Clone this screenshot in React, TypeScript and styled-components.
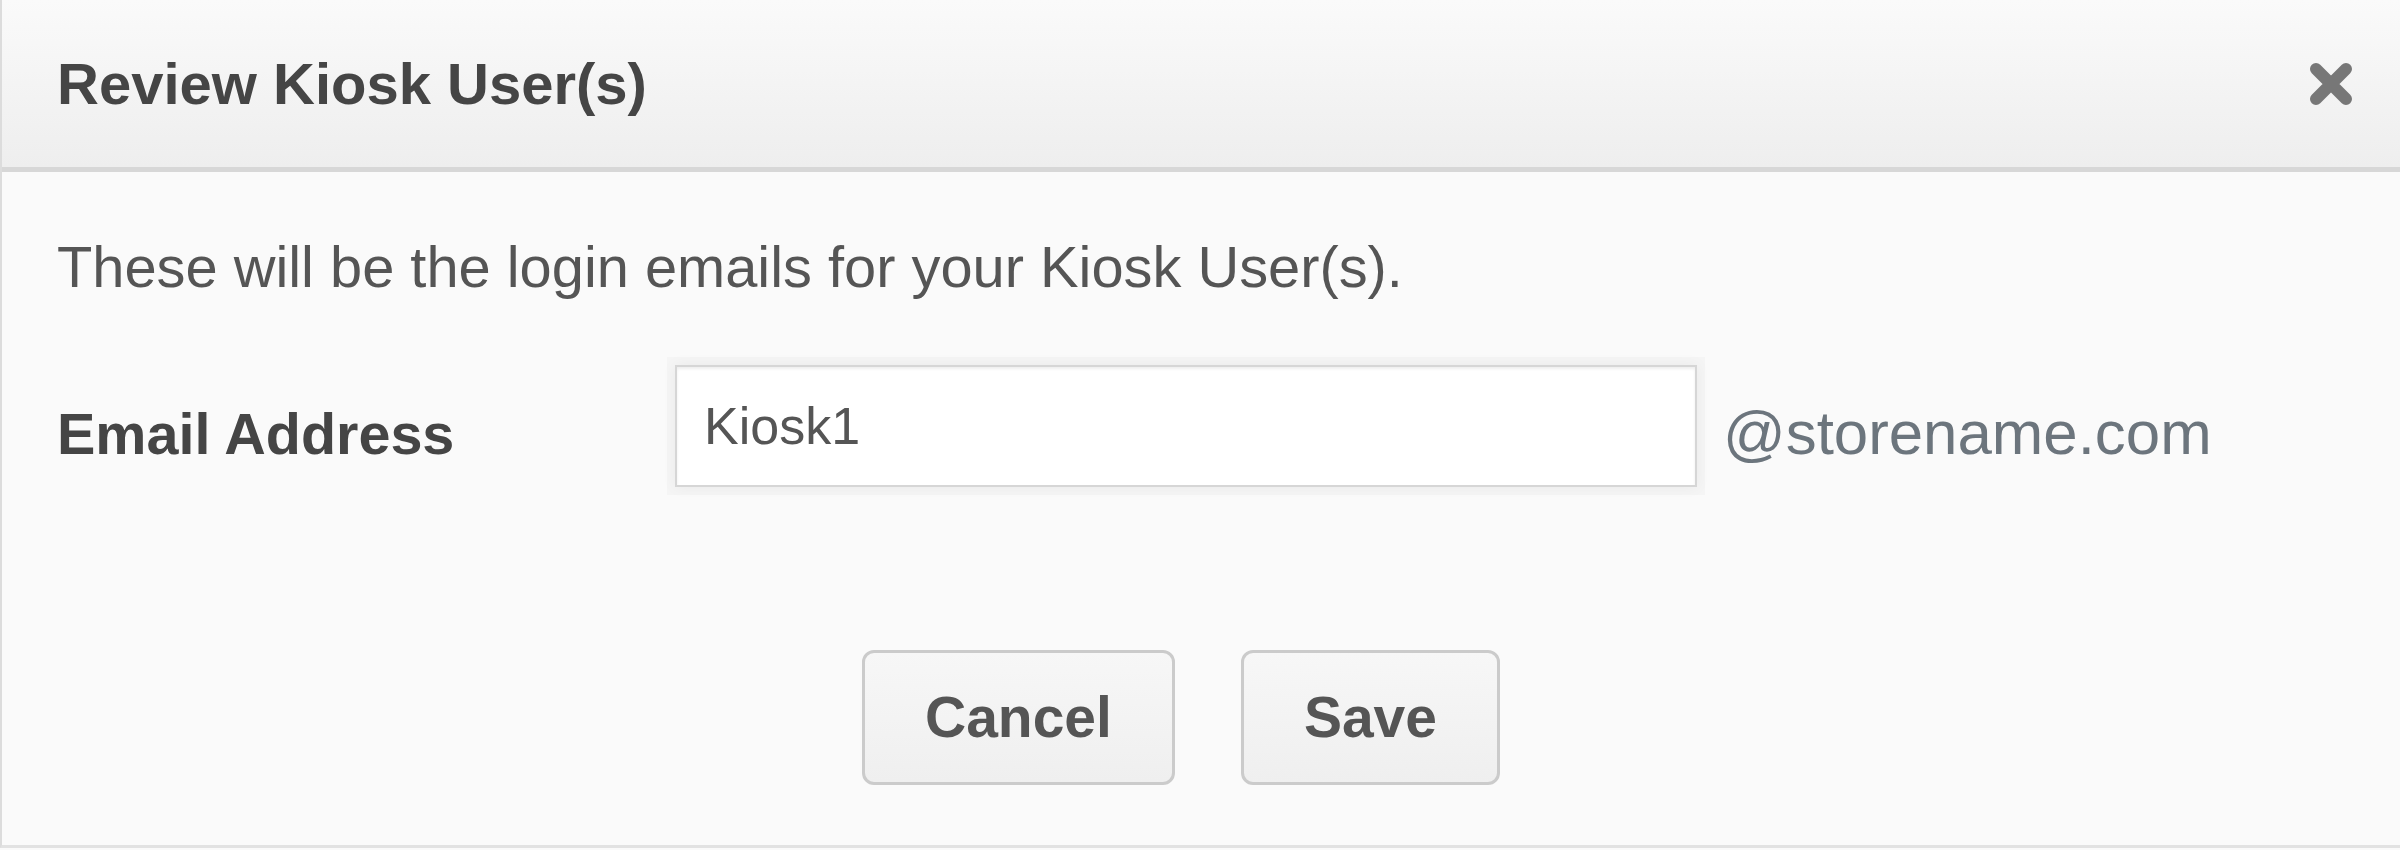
import styled, { createGlobalStyle } from "styled-components";

const GlobalStyle = createGlobalStyle`
  html, body {
    margin: 0;
    padding: 0;
    background: #fafafa;
  }
  body {
    font-family: "Liberation Sans", Arial, sans-serif;
    overflow: hidden;
  }
`;

const Modal = styled.div`
  width: 2400px;
  height: 848px;
  box-sizing: border-box;
  background: #fafafa;
  border-left: 2px solid #dcdcdc;
  border-bottom: 3px solid #e2e2e2;
  display: flex;
  flex-direction: column;
`;

const Header = styled.div`
  height: 167px;
  flex-shrink: 0;
  border-bottom: 5px solid #d7d7d7;
  background: linear-gradient(to bottom, #fafafa 0%, #eeeeee 100%);
  display: flex;
  align-items: center;
  justify-content: space-between;
  padding: 0 46px 0 55px;
`;

const Title = styled.h4`
  margin: 0;
  font-size: 58px;
  font-weight: 700;
  color: #454545;
  line-height: 1;
`;

const CloseButton = styled.button`
  border: 0;
  background: transparent;
  padding: 0;
  width: 46px;
  height: 46px;
  display: flex;
  cursor: pointer;
`;

const Body = styled.div`
  flex: 1;
  padding: 0 55px;
  display: flex;
  flex-direction: column;
`;

const Intro = styled.p`
  margin: 67px 0 0;
  font-size: 57.8px;
  line-height: 1;
  color: #555;
`;

const FormRow = styled.div`
  margin-top: 68px;
  display: flex;
  align-items: center;
`;

const Label = styled.label`
  width: 618px;
  flex-shrink: 0;
  font-size: 57.5px;
  font-weight: 700;
  line-height: 1;
  color: #454545;
  margin-top: 18px;
`;

const TextInput = styled.input`
  width: 1022px;
  height: 122px;
  box-sizing: border-box;
  border: 2px solid #d6d6d6;
  border-radius: 0;
  background: #fff;
  padding: 0 0 0 27px;
  font-family: "Liberation Sans", Arial, sans-serif;
  font-size: 52px;
  color: #555;
  box-shadow: inset 0 2px 3px rgba(0, 0, 0, 0.07), 0 0 0 8px rgba(0, 0, 0, 0.018),
    0 0 14px rgba(0, 0, 0, 0.05);
  outline: none;
`;

const Suffix = styled.span`
  margin-left: 26px;
  font-size: 61.8px;
  line-height: 1;
  color: #6c757d;
  margin-top: 14px;
`;

const Actions = styled.div`
  margin-top: 163px;
  padding-right: 40px;
  display: flex;
  justify-content: center;
  gap: 66px;
`;

const ActionButton = styled.button`
  height: 135px;
  box-sizing: border-box;
  padding: 0 60px;
  border: 3px solid #cbcbcb;
  border-radius: 12px;
  background: linear-gradient(to bottom, #f7f7f7 0%, #efefef 100%);
  font-family: "Liberation Sans", Arial, sans-serif;
  font-size: 57px;
  font-weight: 700;
  color: #555;
  cursor: pointer;
`;

function CloseIcon() {
  return (
    <svg width="46" height="46" viewBox="0 0 46 46">
      <path
        d="M8 8 L38 38 M38 8 L8 38"
        stroke="#777"
        strokeWidth="12"
        strokeLinecap="round"
        fill="none"
      />
    </svg>
  );
}

export default function App() {
  return (
    <>
      <GlobalStyle />
      <Modal>
        <Header>
          <Title>Review Kiosk User(s)</Title>
          <CloseButton aria-label="Close">
            <CloseIcon />
          </CloseButton>
        </Header>
        <Body>
          <Intro>These will be the login emails for your Kiosk User(s).</Intro>
          <FormRow>
            <Label htmlFor="kiosk-email">Email Address</Label>
            <TextInput id="kiosk-email" defaultValue="Kiosk1" />
            <Suffix>@storename.com</Suffix>
          </FormRow>
          <Actions>
            <ActionButton>Cancel</ActionButton>
            <ActionButton>Save</ActionButton>
          </Actions>
        </Body>
      </Modal>
    </>
  );
}
